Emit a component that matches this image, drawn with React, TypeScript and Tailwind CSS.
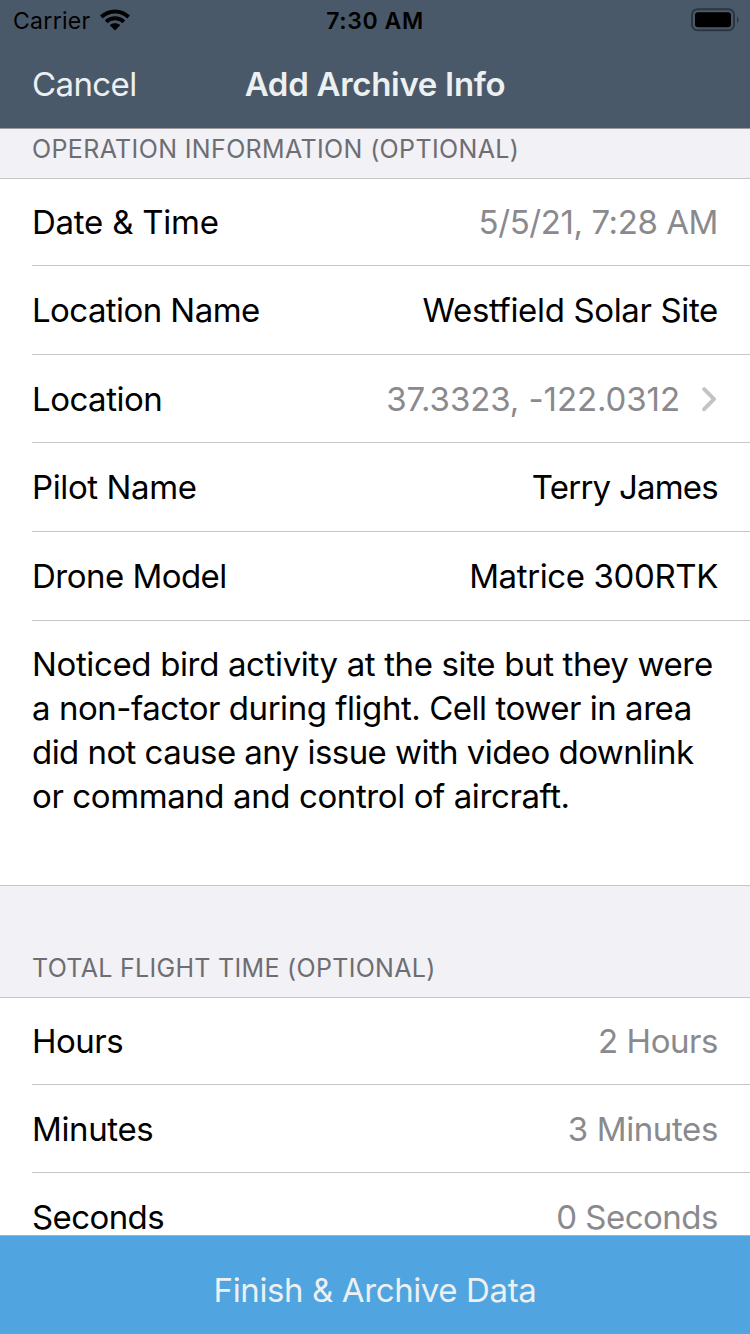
import React from "react";

type RowProps = {
  label: string;
  value: string;
  height: string;
  labelTracking: string;
  valueTracking: string;
  muted?: boolean;
  chevron?: boolean;
  last?: boolean;
};

function Row({ label, value, height, labelTracking, valueTracking, muted, chevron, last }: RowProps) {
  return (
    <div className={`ml-8 flex shrink-0 items-center justify-between pr-8 leading-9 ${height} ${last ? "" : "border-b border-[#c6c6c8]"}`}>
      <span className={`text-black ${labelTracking}`}>{label}</span>
      <span className={`flex items-center ${muted ? "text-[#8a8a8e]" : "text-black"}`}>
        <span className={valueTracking}>{value}</span>
        {chevron && (
          <svg className="ml-[21px] h-[26px] w-[17px]" viewBox="0 0 17 26" fill="none" stroke="#c4c4c7" strokeWidth="4" strokeLinecap="round" strokeLinejoin="round">
            <path d="M3.2 3.2 L13 13.2 L3.2 23.2" />
          </svg>
        )}
      </span>
    </div>
  );
}

export default function App() {
  return (
    <div className="flex h-[1334px] w-[750px] flex-col overflow-hidden bg-[#f2f1f6] font-['Inter',sans-serif] text-[33px] leading-[44px]">
      <header className="flex h-[129px] shrink-0 flex-col border-b border-[#9b9ba0] bg-[#4a5969]">
        <div className="grid h-[42px] grid-cols-3 items-center px-[11px] text-[23px] leading-10 text-black">
          <div className="flex items-center gap-[9px] pl-0.5">
            <span className="tracking-[0.31px]">Carrier</span>
            <svg className="-mt-0.5" width="30" height="22" viewBox="0 0 30 22">
              <path d="M0 6.6 C8.2 -1.6 21.8 -1.6 30 6.6 L27.2 9.4 C20.4 2.9 9.6 2.9 2.8 9.4Z" />
              <path d="M4.8 11.4 C10.4 6 19.6 6 25.2 11.4 L22.3 14.2 C18.2 10.4 11.8 10.4 7.7 14.2Z" />
              <path d="M9.8 16.3 C12.7 13.7 17.3 13.7 20.2 16.3 L15.5 21.1 Q15 21.6 14.5 21.1Z" />
            </svg>
          </div>
          <span className="text-center font-semibold tracking-[0.6px]">7:30 AM</span>
          <svg className="-mt-0.5 justify-self-end" width="48" height="24" viewBox="0 0 48 24">
            <rect x="1" y="1.2" width="42" height="21" rx="5.5" fill="none" stroke="#2c3641" strokeWidth="2" />
            <rect x="4" y="4.2" width="36" height="15" rx="3" />
            <path d="M46 8.2q3.4 3.6 0 7.2z" fill="#2c3641" />
          </svg>
        </div>
        <div className="grid h-[86px] grid-cols-[1fr_auto_1fr] items-center px-8 pb-0.5 text-[#ecf0f1]">
          <span className="tracking-[-0.6px]">Cancel</span>
          <span className="whitespace-nowrap font-semibold tracking-[-0.3px]">Add Archive Info</span>
        </div>
      </header>
      <h2 className="flex h-[50px] shrink-0 items-center border-b border-[#c6c6c8] px-8 pb-2.5 text-[25px] leading-8 tracking-[0.36px] text-[#6d6d72]">OPERATION INFORMATION (OPTIONAL)</h2>
      <section className="flex h-[707px] shrink-0 flex-col border-b border-[#c6c6c8] bg-white">
        <Row label="Date & Time" value="5/5/21, 7:28 AM" height="h-[87px]" labelTracking="tracking-[-0.24px]" valueTracking="tracking-[-0.42px]" muted />
        <Row label="Location Name" value="Westfield Solar Site" height="h-[89px]" labelTracking="tracking-[-0.57px]" valueTracking="tracking-[-0.35px]" />
        <Row label="Location" value="37.3323, -122.0312" height="h-[88px]" labelTracking="tracking-[-0.5px]" valueTracking="tracking-[-0.08px]" muted chevron />
        <Row label="Pilot Name" value="Terry James" height="h-[89px]" labelTracking="tracking-[-0.39px]" valueTracking="tracking-[-0.77px]" />
        <Row label="Drone Model" value="Matrice 300RTK" height="h-[89px]" labelTracking="tracking-[-0.52px]" valueTracking="tracking-[-0.38px]" />
        <p className="flex flex-col whitespace-nowrap pl-8 pt-[21px]">
          <span className="tracking-[-0.36px]">Noticed bird activity at the site but they were</span>
          <span className="tracking-[-0.46px]">a non-factor during flight. Cell tower in area</span>
          <span className="tracking-[-0.56px]">did not cause any issue with video downlink</span>
          <span className="tracking-[-0.4px]">or command and control of aircraft.</span>
        </p>
      </section>
      <h2 className="flex h-28 shrink-0 items-end border-b border-[#c6c6c8] px-8 pb-[7px] text-[25px] tracking-[0.3px] text-[#6d6d72]">TOTAL FLIGHT TIME (OPTIONAL)</h2>
      <section className="flex h-[237px] shrink-0 flex-col overflow-hidden bg-white">
        <Row label="Hours" value="2 Hours" height="h-[87px]" labelTracking="tracking-[-0.5px]" valueTracking="tracking-[-0.45px]" muted />
        <Row label="Minutes" value="3 Minutes" height="h-[88px]" labelTracking="tracking-[-0.37px]" valueTracking="tracking-[-0.38px]" muted />
        <Row label="Seconds" value="0 Seconds" height="h-[88px]" labelTracking="tracking-[-0.6px]" valueTracking="tracking-[-0.5px]" muted last />
      </section>
      <button className="flex h-[100px] shrink-0 items-center justify-center border-t border-[#a3b5c0] bg-[#50a4df] pt-[9px] tracking-[-0.39px] text-[#ecf0f1]">Finish &amp; Archive Data</button>
    </div>
  );
}
